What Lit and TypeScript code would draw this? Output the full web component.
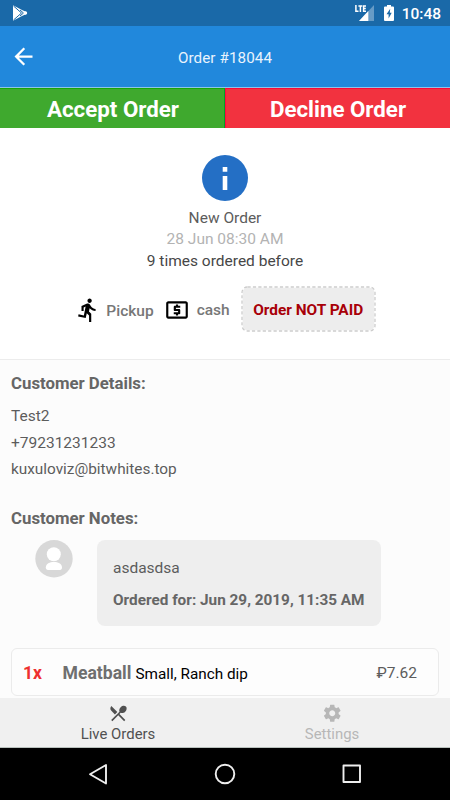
import { LitElement, html, css, svg } from "lit";
import { customElement } from "lit/decorators.js";

const ICONS = {
  back: "M20 11H7.83l5.59-5.59L12 4l-8 8 8 8 1.41-1.41L7.83 13H20v-2z",
  run: "M13.49 5.48c1.1 0 2-.9 2-2s-.9-2-2-2-2 .9-2 2 .9 2 2 2zm-3.6 13.9l1-4.4 2.1 2v6h2v-7.5l-2.1-2 .6-3c1.3 1.5 3.3 2.5 5.5 2.5v-2c-1.9 0-3.5-1-4.3-2.4l-1-1.6c-.4-.6-1-1-1.7-1-.3 0-.5.1-.8.1l-5.2 2.2v4.7h2v-3.4l1.8-.7-1.6 8.1-4.9-1-.4 2 7 1.4z",
  cash: "M11 17h2v-1h1c.55 0 1-.45 1-1v-3c0-.55-.45-1-1-1h-3v-1h4V8h-2V7h-2v1h-1c-.55 0-1 .45-1 1v3c0 .55.45 1 1 1h3v1H9v2h2v1zm9-13H4c-1.11 0-1.99.89-1.99 2L2 18c0 1.11.89 2 2 2h16c1.11 0 2-.89 2-2V6c0-1.11-.89-2-2-2zm0 14H4V6h16v12z",
  food: "M8.1 13.34l2.83-2.83L3.91 3.5c-1.56 1.56-1.56 4.09 0 5.66l4.19 4.18zm6.78-1.81c1.53.71 3.68.21 5.27-1.38 1.91-1.91 2.28-4.65.81-6.12-1.46-1.46-4.2-1.1-6.12.81-1.59 1.59-2.09 3.74-1.38 5.27L3.7 19.87l1.41 1.41L12 14.41l6.88 6.88 1.41-1.41L13.41 13l1.47-1.47z",
  gear: "M19.43 12.98c.04-.32.07-.64.07-.98s-.03-.66-.07-.98l2.11-1.65c.19-.15.24-.42.12-.64l-2-3.46c-.12-.22-.39-.3-.61-.22l-2.49 1c-.52-.4-1.08-.73-1.69-.98l-.38-2.65C14.46 2.18 14.25 2 14 2h-4c-.25 0-.46.18-.49.42l-.38 2.65c-.61.25-1.17.59-1.69.98l-2.49-1c-.23-.09-.49 0-.61.22l-2 3.46c-.13.22-.07.49.12.64l2.11 1.65c-.04.32-.07.65-.07.98s.03.66.07.98l-2.11 1.65c-.19.15-.24.42-.12.64l2 3.46c.12.22.39.3.61.22l2.49-1c.52.4 1.08.73 1.69.98l.38 2.65c.03.24.24.42.49.42h4c.25 0 .46-.18.49-.42l.38-2.65c.61-.25 1.17-.59 1.69-.98l2.49 1c.23.09.49 0 .61-.22l2-3.46c.12-.22.07-.49-.12-.64l-2.11-1.65zM12 15.5c-1.93 0-3.5-1.57-3.5-3.5s1.57-3.5 3.5-3.5 3.5 1.57 3.5 3.5-1.57 3.5-3.5 3.5z",
};

const icon = (name: keyof typeof ICONS, cls: string) =>
  html`<svg class=${cls} viewBox="0 0 24 24">${svg`<path d=${ICONS[name]} fill="currentColor"/>`}</svg>`;

@customElement("app-root")
export class AppRoot extends LitElement {
  static styles = css`
    :host {
      display: flex;
      flex-direction: column;
      height: 800px;
      overflow: hidden;
      background: #fcfcfc;
      color: #5c5c5c;
      font: 15.5px/20px Roboto, sans-serif;
    }
    * { box-sizing: border-box; }
    svg { display: block; flex: none; }
    .status {
      flex: none;
      height: 26px;
      padding: 0 9px 0 13px;
      display: flex;
      align-items: center;
      background: #1a69a8;
      color: #fff;
    }
    .grow { flex: 1; }
    .play { width: 15px; height: 16px; }
    .signal { width: 20px; height: 16px; margin-right: 9px; }
    .battery { width: 10px; height: 16px; margin-right: 8px; }
    .clock { font-weight: 500; font-size: 15.5px; padding-top: 2px; }
    .bar {
      flex: none;
      height: 61px;
      display: grid;
      grid-template-columns: 60px 1fr 60px;
      align-items: center;
      background: #2188dc;
      color: #fff;
      padding-top: 1px;
    }
    .back { width: 27px; height: 27px; margin: 0 0 1px 10px; }
    .title { text-align: center; color: #e9f3fc; font-size: 15.2px; letter-spacing: 0.1px; padding-top: 1px; }
    .actions {
      flex: none;
      height: 41px;
      display: grid;
      grid-template-columns: 1fr 1fr;
      border-top: 1px solid #8fc4e8;
    }
    .action {
      display: flex;
      align-items: center;
      justify-content: center;
      color: #fff;
      font-weight: 700;
      font-size: 22.3px;
      padding-top: 1px;
    }
    .accept { background: #3fa92e; border-top: 1px solid #17a40c; border-right: 1px solid #00a628; padding-left: 2px; }
    .decline { background: #f2323f; border-top: 1px solid #f8083a; border-left: 1px solid #ff0540; }
    .hero {
      flex: none;
      height: 232px;
      display: flex;
      flex-direction: column;
      align-items: center;
      padding-top: 27px;
      background: #fff;
      border-bottom: 1px solid #ececec;
    }
    .info { width: 46px; height: 46px; margin-bottom: 7px; }
    .line { height: 21.3px; line-height: 21.3px; }
    .muted { color: #b3b3b3; }
    .dark { color: #474747; }
    .tags {
      display: flex;
      align-items: center;
      margin: 14px 0 0 1px;
      font-weight: 500;
      color: #777;
    }
    .tagicon { width: 26px; height: 26px; color: #000; margin-top: 2px; }
    .pickup { margin: 4px 10px 0 5px; }
    .cash { margin: 3px 11px 0 7px; }
    .unpaid {
      position: relative;
      width: 135px;
      height: 46px;
      display: flex;
      align-items: center;
      justify-content: center;
      color: #a80008;
      font-weight: 700;
      font-size: 15.4px;
      padding-top: 2px;
    }
    .dash { position: absolute; inset: 0; width: 135px; height: 46px; }
    .unpaid span { position: relative; }
    .body {
      flex: 1;
      min-height: 0;
      overflow: hidden;
      padding: 13px 11px 0;
    }
    .head { font-weight: 700; font-size: 16.8px; color: #666; height: 20px; }
    .details { margin: 10px 0 25px; }
    .detail { height: 26.7px; line-height: 26.7px; }
    .mail { font-size: 15.35px; }
    .note { display: flex; align-items: flex-start; margin-top: 12px; padding-left: 24px; }
    .avatar { width: 38px; height: 38px; margin-right: 24px; }
    .bubble {
      width: 284px;
      height: 86px;
      border-radius: 8px;
      background: #eee;
      padding: 18px 16px 0;
    }
    .when { margin-top: 12px; font-weight: 700; font-size: 15.33px; color: #666; white-space: nowrap; }
    .item {
      height: 48px;
      margin-top: 22px;
      border: 1px solid #ebebeb;
      border-radius: 6px;
      background: #fdfdfd;
      display: flex;
      align-items: center;
      padding: 2px 21px 0 11px;
    }
    .qty { width: 39.5px; color: #ee2f2f; font-weight: 700; font-size: 17.5px; }
    .name { color: #6f6f6f; font-weight: 700; font-size: 17.6px; margin-right: 4px; }
    .opts { flex: 1; color: #000; padding-top: 1px; font-size: 15.3px; }
    .tabs {
      flex: none;
      height: 50px;
      display: flex;
      background: #f0f0f0;
      border-bottom: 1px solid #b9c1bd;
      font-size: 14.9px;
    }
    .tab {
      width: 236px;
      display: flex;
      flex-direction: column;
      align-items: center;
      padding-top: 4.5px;
      color: #505050;
    }
    .tab.off { width: 192px; color: #b7b7b7; }
    .tabicon { width: 20.5px; height: 20.5px; margin-bottom: 1px; }
    .nav { flex: none; height: 52px; display: flex; justify-content: center; background: #000; }
    .keys { width: 450px; height: 52px; }
  `;

  render() {
    return html`
      <div class="status">
        <svg class="play" viewBox="0 0 15 16">
          <path d="M0 .3 9 5v6L0 15.7z M8 4.5 13.8 7.2v1.6L8 11.5z" fill="#fff"/>
          <path d="M.5 1 8.5 8l-8 7M7 5l3.5 3L7 11" fill="none" stroke="#1a69a8" stroke-width="1"/>
          <circle cx="12.4" cy="8" r="1.8" fill="#fff"/>
        </svg>
        <span class="grow"></span>
        <svg class="signal" viewBox="0 0 20 16">
          <path d="M19 0v16H4z" fill="#669bc6"/>
          <path d="M13.3 6v10H4z" fill="#fff"/>
          <path d="M0 0h11.500v7.500H0z" fill="#1a69a8"/>
          <path d="M.9 0V6.300h2.600M3.400.9h3.900M5.400.9v6M11 .9H8.600v5.400H11M8.600 3.600h2.200" fill="none" stroke="#fff" stroke-width="1.500"/>
        </svg>
        <svg class="battery" viewBox="0 0 10 16">
          <path d="M3 0h4v1.600h2q1 0 1 1V15q0 1-1 1H1q-1 0-1-1V2.600q0-1 1-1h2z" fill="#fff"/>
          <path d="M6.200 3.800 2.500 9.300h2.100v4.200L7.700 7.800H5.800z" fill="#1a69a8"/>
        </svg>
        <span class="clock">10:48</span>
      </div>
      <div class="bar">${icon("back", "back")}<span class="title">Order #18044</span></div>
      <div class="actions">
        <div class="action accept">Accept Order</div>
        <div class="action decline">Decline Order</div>
      </div>
      <div class="hero">
        <svg class="info" viewBox="0 0 46 46">
          <circle cx="23" cy="23" r="23" fill="#246fc5"/>
          <path d="M20.700 12h4.600v4.800h-4.600zM20.700 21h4.600v14h-4.600z" fill="#fff"/>
        </svg>
        <div class="line">New Order</div>
        <div class="line muted">28 Jun 08:30 AM</div>
        <div class="line dark">9 times ordered before</div>
        <div class="tags">
          ${icon("run", "tagicon")}<span class="pickup">Pickup</span>
          ${icon("cash", "tagicon")}<span class="cash">cash</span>
          <div class="unpaid">
            <svg class="dash" viewBox="0 0 135 46">
              <rect x="1" y="1" width="133" height="44" rx="5.500" fill="#ededed" stroke="#fff" stroke-width="1.300"/>
              <rect x="1" y="1" width="133" height="44" rx="5.500" fill="none" stroke="#cdcdcd" stroke-width="1.300" stroke-dasharray="3.200 2.200"/>
            </svg>
            <span>Order NOT PAID</span>
          </div>
        </div>
      </div>
      <div class="body">
        <div class="head">Customer Details:</div>
        <div class="details">
          <div class="detail">Test2</div>
          <div class="detail">+79231231233</div>
          <div class="detail mail">kuxuloviz@bitwhites.top</div>
        </div>
        <div class="head">Customer Notes:</div>
        <div class="note">
          <svg class="avatar" viewBox="0 0 38 38">
            <circle cx="19" cy="18.700" r="18.700" fill="#d8d8d8"/>
            <circle cx="18.800" cy="14.200" r="7" fill="#fff"/>
            <path d="M10.800 27.500c0-7.200 16.200-7.200 16.200 0 0 1.500-.8 2.500-2.200 2.500H13c-1.400 0-2.200-1-2.200-2.500z" fill="#fff"/>
          </svg>
          <div class="bubble">
            <div>asdasdsa</div>
            <div class="when">Ordered for: Jun 29, 2019, 11:35 AM</div>
          </div>
        </div>
        <div class="item">
          <span class="qty">1x</span><span class="name">Meatball</span>
          <span class="opts">Small, Ranch dip</span><span>₽7.62</span>
        </div>
      </div>
      <div class="tabs">
        <div class="tab">${icon("food", "tabicon")}<span>Live Orders</span></div>
        <div class="tab off">${icon("gear", "tabicon")}<span>Settings</span></div>
      </div>
      <div class="nav">
        <svg class="keys" viewBox="0 0 450 52" fill="none" stroke="#eee" stroke-width="1.900" stroke-linejoin="round">
          <path d="M106 17v18.500L90 26.200z"/>
          <circle cx="225" cy="26" r="9.300"/>
          <rect x="343.500" y="17.500" width="16.500" height="16.500"/>
        </svg>
      </div>
    `;
  }
}
